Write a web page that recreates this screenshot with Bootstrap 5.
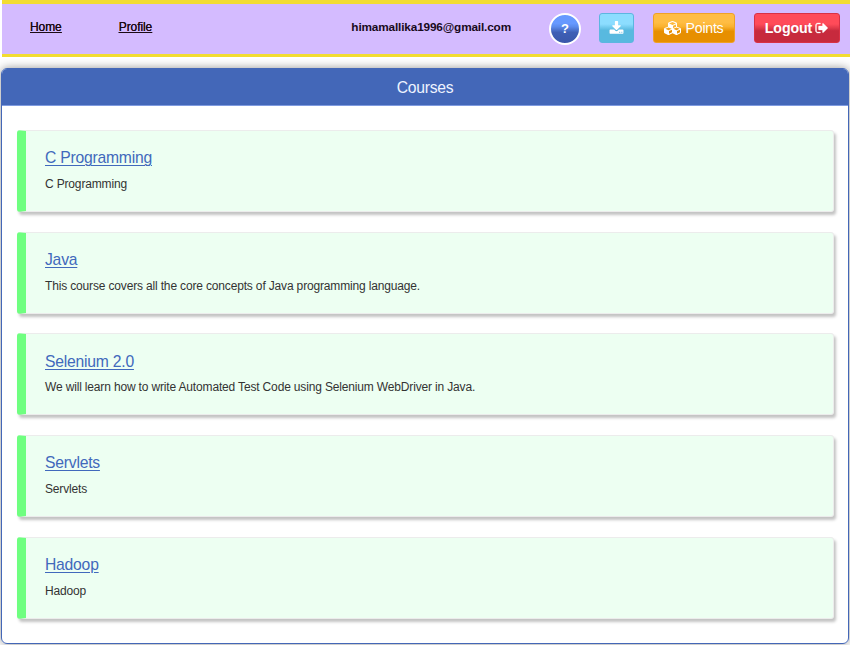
<!DOCTYPE html>
<html lang="en">
<head>
<meta charset="utf-8">
<meta name="viewport" content="width=device-width, initial-scale=1">
<title>Courses</title>
<link href="https://cdn.jsdelivr.net/npm/bootstrap@5.3.0/dist/css/bootstrap.min.css" rel="stylesheet">
<style>
body { font-family: "Liberation Sans", Arial, sans-serif; font-size: 12px; color: #333; background: #fff; height: 645px; overflow: hidden; }
.topbar { height: 57px; margin-left: 2px; background: #d4bbff; border-top: 4px solid #f2dc32; border-bottom: 3px solid #f2dc32; padding: 0 10px 2px 28px; }
.topbar-link { font-size: 12px; line-height: 18px; letter-spacing: -.08px; margin-bottom: 3px; color: #1c0a14; text-shadow: 0 0 .6px #1c0a14; text-underline-offset: 1px; }
.topbar-link + .topbar-link { margin-left: 57px; }
.mail { font-size: 11.8px; letter-spacing: -.16px; line-height: 18px; margin-bottom: 3px; color: #190a1c; margin-right: 38px; }
.help { width: 32px; height: 32px; border: 2px solid #fff; background: linear-gradient(#6699ff 0 30%, #5b8bec 42%, #3e5fb5 62%, #3957aa); font-size: 13px; line-height: 28px; margin-top: 1px; margin-right: 18px; }
.tool { height: 30px; border-radius: 3px; padding: 0; color: #fff; display: flex; align-items: center; justify-content: center; line-height: 18px; }
.tool:hover { color: #fff; }
.tool-get { width: 35px; margin-right: 19px; border-color: #5cb6e0; background: linear-gradient(#8cddff 0 36%, #58b9df 58%); }
.tool-points { width: 82px; margin-right: 19px; font-size: 14.2px; letter-spacing: -.25px; border-color: #efa125; background: linear-gradient(#ffbd43 0 30%, #fab22f 45%, #e78f00 62%); }
.tool-points svg { margin-right: 4px; margin-left: -1px; }
.tool-out { width: 86px; font-size: 14.2px; letter-spacing: -.1px; border-color: #d83145; background: linear-gradient(#ff4b59 0 36%, #e03a4a 50%, #c72a3d 60%); }
.tool-out svg { margin-left: 3px; stroke: currentColor; stroke-width: 40; }
.panel { margin: 11px 1px 0 1px; height: 576px; border: 1px solid #4467b7; border-radius: 6px; box-shadow: 0 0 10px rgba(0,0,0,.42); overflow: hidden; }
.panel-wrap { height: 588px; overflow: hidden; }
.panel-title { height: 37px; background: #4367b8; border-bottom: 1px solid #7f9be0; color: #eef3ff; font-size: 15.7px; letter-spacing: -.25px; line-height: 37px; }
.course-list { padding: 24px 14px 0 15px; display: grid; row-gap: 19.65px; }
.course { height: 82px; background: #edfff2; border: 1px solid #ececec; border-left: 9px solid #6fff80; border-radius: 3px; box-shadow: 2px 3px 3px rgba(0,0,0,.24); padding: 16.3px 19px 0; }
.course-name { font-size: 15.7px; letter-spacing: -.22px; line-height: 22px; color: #4169bc; text-decoration-thickness: 1px; text-underline-offset: 2px; }
.course-about { font-size: 12px; letter-spacing: -.16px; line-height: 18px; margin: 5.8px 0 0; color: #333; }
</style>
</head>
<body>
<nav class="topbar d-flex align-items-center">
  <a href="#" class="topbar-link">Home</a>
  <a href="#" class="topbar-link">Profile</a>
  <span class="mail fw-bold ms-auto">himamallika1996@gmail.com</span>
  <button class="help rounded-circle text-white fw-bold text-center p-0" aria-label="Help">?</button>
  <button class="btn tool tool-get" aria-label="Download"><svg width="15" height="15" viewBox="0 0 1792 1792" fill="currentColor"><path d="M1344 1344q0-26-19-45t-45-19-45 19-19 45 19 45 45 19 45-19 19-45zm256 0q0-26-19-45t-45-19-45 19-19 45 19 45 45 19 45-19 19-45zm128-224v320q0 40-28 68t-68 28h-1472q-40 0-68-28t-28-68v-320q0-40 28-68t68-28h465l135 136q58 56 136 56t136-56l136-136h464q40 0 68 28t28 68zm-325-569q17 41-14 70l-448 448q-18 19-45 19t-45-19l-448-448q-31-29-14-70 17-39 59-39h256v-448q0-26 19-45t45-19h256q26 0 45 19t19 45v448h256q42 0 59 39z"/></svg></button>
  <button class="btn tool tool-points"><svg width="18" height="14" viewBox="0 0 2304 1792" fill="currentColor"><path d="M640 1632l384-192v-314l-384 164v342zm-64-454l404-173-404-173-404 173zm1088 454l384-192v-314l-384 164v342zm-64-454l404-173-404-173-404 173zm-448-293l384-165v-266l-384 164v267zm-64-379l441-189-441-189-441 189zm1088 518v416q0 36-19 67t-52 47l-448 224q-25 14-57 14t-57-14l-448-224q-4-2-7-4-2 2-7 4l-448 224q-25 14-57 14t-57-14l-448-224q-33-16-52-47t-19-67v-416q0-38 21.5-70t56.5-48l434-186v-400q0-38 21.5-70t56.5-48l448-192q23-10 50-10t50 10l448 192q35 16 56.5 48t21.5 70v400l434 186q36 16 57 48t21 70z"/></svg>Points</button>
  <button class="btn tool tool-out fw-bold">Logout<svg width="14" height="14" viewBox="0 0 1792 1792" fill="currentColor"><path d="M704 1440q0 4 1 20t.5 26.5-3 23.5-10 19.5-20.5 6.5h-320q-119 0-203.5-84.5t-84.5-203.5v-704q0-119 84.5-203.5t203.5-84.5h320q13 0 22.5 9.5t9.5 22.5q0 4 1 20t.5 26.5-3 23.5-10 19.5-20.5 6.5h-320q-66 0-113 47t-47 113v704q0 66 47 113t113 47h312l11.5 1 11.5 3 8 5.5 7 9 2 13.5zm928-544q0 26-19 45l-544 544q-19 19-45 19t-45-19-19-45v-288h-448q-26 0-45-19t-19-45v-384q0-26 19-45t45-19h448v-288q0-26 19-45t45-19 45 19l544 544q19 19 19 45z"/></svg></button>
</nav>
<main class="panel-wrap">
  <section class="panel">
    <header class="panel-title text-center">Courses</header>
    <div class="course-list">
      <article class="course"><a href="#" class="course-name d-inline-block">C Programming</a><p class="course-about">C Programming</p></article>
      <article class="course"><a href="#" class="course-name d-inline-block">Java</a><p class="course-about">This course covers all the core concepts of Java programming language.</p></article>
      <article class="course"><a href="#" class="course-name d-inline-block">Selenium 2.0</a><p class="course-about">We will learn how to write Automated Test Code using Selenium WebDriver in Java.</p></article>
      <article class="course"><a href="#" class="course-name d-inline-block">Servlets</a><p class="course-about">Servlets</p></article>
      <article class="course"><a href="#" class="course-name d-inline-block">Hadoop</a><p class="course-about">Hadoop</p></article>
    </div>
  </section>
</main>
<script src="https://cdn.jsdelivr.net/npm/bootstrap@5.3.0/dist/js/bootstrap.bundle.min.js"></script>
</body>
</html>
